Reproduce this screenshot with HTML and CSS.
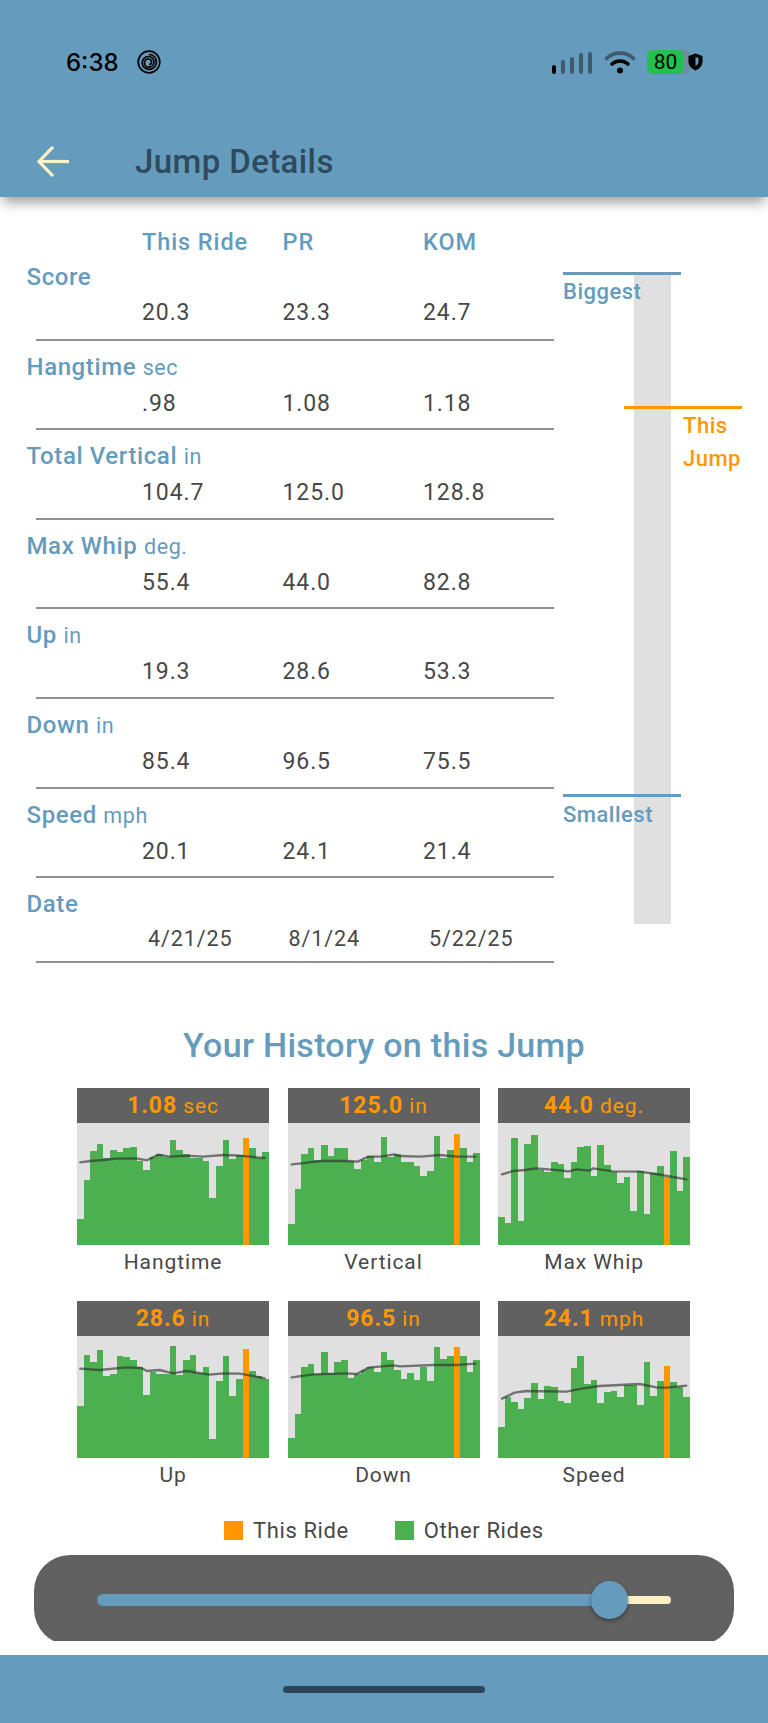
FILE: index.html
```html
<!DOCTYPE html>
<html lang="en">
<head>
    <meta charset="UTF-8">
    <meta name="viewport" content="width=device-width, initial-scale=1.0">
    <title>Jump Details</title>
    <link rel="stylesheet" href="styles.css">
</head>
<body>
    <header class="app-bar">
        <div class="status-bar">
            <div class="status-left">
                <span class="clock">6:38</span>
                <svg class="spiral" width="24" height="26" viewBox="0 0 24 26" fill="none" stroke="#000" stroke-width="1.7">
                    <circle cx="12" cy="13" r="10.8"/>
                    <path d="M12 5.5c4.6 0 7.6 3.4 7.4 7.6-.2 4.2-3.4 7.2-7.4 7.2-3.8 0-6.8-3-6.8-6.6 0-3.5 2.8-6.2 6.2-6.2 3.2 0 5.6 2.5 5.6 5.6 0 2.9-2.3 5.1-5 5.1-2.6 0-4.5-2-4.5-4.3 0-2.2 1.8-3.9 3.8-3.9 1.9 0 3.2 1.5 3.2 3 0 1.500-1.100 2.600-2.400 2.600"/>
                </svg>
            </div>
            <div class="status-right">
                <div class="signal">
                    <span class="sig sig-1"></span>
                    <span class="sig sig-2"></span>
                    <span class="sig sig-3"></span>
                    <span class="sig sig-4"></span>
                    <span class="sig sig-5"></span>
                </div>
                <svg class="wifi" width="32" height="24" viewBox="0 0 32 24" fill="none" stroke-linecap="round">
                    <path d="M2.500 8.500C9.500 1.300 22.500 1.300 29.500 8.500" stroke="#3f5a6e" stroke-width="3.600"/>
                    <path d="M8 14c4.500-4 11.500-4 16 0" stroke="#000" stroke-width="3.600"/>
                    <circle cx="16" cy="20.500" r="3" fill="#000"/>
                </svg>
                <div class="battery"><span class="battery-level">80</span></div>
                <svg class="shield" width="15" height="18" viewBox="0 0 15 18">
                    <path d="M7.500 0.500L14.500 3v5.500c0 4-3 7.500-7 9-4-1.500-7-5-7-9V3z" fill="#000"/>
                    <path d="M7.500 4L10.500 5v3.500c0 2-1.300 3.600-3 4.500z" fill="#659cbd"/>
                </svg>
            </div>
        </div>
        <div class="title-row">
            <svg class="back" width="32" height="31" viewBox="0 0 32 31" fill="none" stroke="#fdf0c5" stroke-width="3.200">
                <path d="M16 1L2 15.500 16 30"/>
                <path d="M2 15.500H32"/>
            </svg>
            <h1 class="title">Jump Details</h1>
        </div>
    </header>

    <section class="stats">
        <div class="table">
            <div class="cols head">
                <span>This Ride</span>
                <span>PR</span>
                <span>KOM</span>
            </div>
            <div class="row">
                <div class="label">Score</div>
                <div class="cols"><span>20.3</span><span>23.3</span><span>24.7</span></div>
            </div>
            <div class="row">
                <div class="label">Hangtime <small>sec</small></div>
                <div class="cols"><span>.98</span><span>1.08</span><span>1.18</span></div>
            </div>
            <div class="row">
                <div class="label">Total Vertical <small>in</small></div>
                <div class="cols"><span>104.7</span><span>125.0</span><span>128.8</span></div>
            </div>
            <div class="row">
                <div class="label">Max Whip <small>deg.</small></div>
                <div class="cols"><span>55.4</span><span>44.0</span><span>82.8</span></div>
            </div>
            <div class="row">
                <div class="label">Up <small>in</small></div>
                <div class="cols"><span>19.3</span><span>28.6</span><span>53.3</span></div>
            </div>
            <div class="row">
                <div class="label">Down <small>in</small></div>
                <div class="cols"><span>85.4</span><span>96.5</span><span>75.5</span></div>
            </div>
            <div class="row">
                <div class="label">Speed <small>mph</small></div>
                <div class="cols"><span>20.1</span><span>24.1</span><span>21.4</span></div>
            </div>
            <div class="row date-row">
                <div class="label">Date</div>
                <div class="cols dates"><span>4/21/25</span><span>8/1/24</span><span>5/22/25</span></div>
            </div>
        </div>
        <div class="gauge">
            <div class="gauge-bar"></div>
            <div class="mark mark-top"></div>
            <div class="mark-text text-top">Biggest</div>
            <div class="mark mark-this"></div>
            <div class="mark-text text-this">This<br>Jump</div>
            <div class="mark mark-bottom"></div>
            <div class="mark-text text-bottom">Smallest</div>
        </div>
    </section>

    <h2 class="history-title">Your History on this Jump</h2>

    <section class="charts">
        <div class="chart">
            <div class="chart-head"><b>1.08</b> sec</div>
            <div class="plot" id="plot-hangtime"></div>
            <div class="caption">Hangtime</div>
        </div>
        <div class="chart">
            <div class="chart-head"><b>125.0</b> in</div>
            <div class="plot" id="plot-vertical"></div>
            <div class="caption">Vertical</div>
        </div>
        <div class="chart">
            <div class="chart-head"><b>44.0</b> deg.</div>
            <div class="plot" id="plot-whip"></div>
            <div class="caption">Max Whip</div>
        </div>
        <div class="chart">
            <div class="chart-head"><b>28.6</b> in</div>
            <div class="plot" id="plot-up"></div>
            <div class="caption">Up</div>
        </div>
        <div class="chart">
            <div class="chart-head"><b>96.5</b> in</div>
            <div class="plot" id="plot-down"></div>
            <div class="caption">Down</div>
        </div>
        <div class="chart">
            <div class="chart-head"><b>24.1</b> mph</div>
            <div class="plot" id="plot-speed"></div>
            <div class="caption">Speed</div>
        </div>
    </section>

    <div class="legend">
        <span class="swatch swatch-this"></span><span class="legend-text">This Ride</span>
        <span class="swatch swatch-other"></span><span class="legend-text">Other Rides</span>
    </div>

    <div class="slider-clip">
        <div class="slider">
            <div class="track-on"></div>
            <div class="thumb"></div>
            <div class="track-off"></div>
        </div>
    </div>

    <footer class="bottom-bar">
        <div class="home-pill"></div>
    </footer>

    <script src="charts.js"></script>
</body>
</html>
```

FILE: styles.css
```css
body {
    font-family: Roboto, "Liberation Sans", sans-serif;
    background-color: #fff;
    color: #484848;
    margin: 0;
    width: 768px;
    height: 1723px;
    display: flex;
    flex-direction: column;
    overflow: hidden;
}

.app-bar {
    height: 197px;
    background: #659cbd;
    box-shadow: 0 8px 12px -3px rgba(0, 0, 0, 0.4);
    position: relative;
    z-index: 2;
    flex-shrink: 0;
}

.status-bar {
    height: 75px;
    padding: 49px 65px 0 66px;
    box-sizing: border-box;
    display: flex;
    justify-content: space-between;
    align-items: center;
}

.status-left, .status-right {
    display: flex;
    align-items: center;
}

.clock {
    font-family: Inter, Roboto, sans-serif;
    font-weight: 500;
    font-size: 24px;
    color: #000;
    margin-right: 18px;
}

.signal {
    display: flex;
    align-items: flex-end;
    gap: 4.500px;
    height: 23px;
    margin-right: 12px;
}

.sig {
    width: 4.500px;
    background: #3f5a6e;
    border-radius: 2px;
}

.sig-1 { height: 9px; background: #000; }
.sig-2 { height: 14px; }
.sig-3 { height: 17px; }
.sig-4 { height: 21px; }
.sig-5 { height: 22px; }

.wifi {
    margin-right: 11px;
}

.battery {
    width: 43px;
    height: 24px;
    border-radius: 5px;
    background: #6f8ca1;
    overflow: hidden;
}

.battery-level {
    display: block;
    width: 36px;
    height: 24px;
    background: #22c04c;
    border-radius: 5px;
    color: #000;
    font-size: 21px;
    line-height: 24px;
    text-align: center;
    padding-left: 1px;
    box-sizing: border-box;
}

.shield {
    margin-left: -2px;
}

.title-row {
    display: flex;
    align-items: center;
    height: 60px;
    margin-top: 56px;
    padding-left: 37px;
}

.title {
    margin: 0 0 0 66px;
    font-size: 33px;
    font-weight: 500;
    letter-spacing: 0.4px;
    color: #2f4a5e;
}

.stats {
    display: flex;
    flex-shrink: 0;
}

.table {
    width: 554px;
    padding-top: 31px;
}

.cols {
    display: grid;
    grid-template-columns: 140.500px 140.500px 1fr;
    padding-left: 142px;
    font-size: 23px;
    line-height: 28px;
    letter-spacing: 0.9px;
}

.head {
    color: #659cbd;
    font-weight: 500;
    font-size: 23.500px;
    height: 23px;
    line-height: 28px;
}

.row {
    height: 89.600px;
    box-sizing: border-box;
    padding-top: 12px;
    border-bottom: 2px solid #909090;
    margin-left: 36px;
}

.row .cols {
    margin: 8px 0 0 -36px;
}

.label {
    margin-left: -9.500px;
    color: #659cbd;
    font-size: 24px;
    font-weight: 500;
    line-height: 28px;
    letter-spacing: 0.6px;
}

.label small {
    font-size: 21.500px;
    font-weight: 400;
}

.date-row {
    height: 85px;
}

.date-row .cols {
    margin-top: 7px;
}

.dates {
    font-size: 21.500px;
    padding-left: 148px;
}

.gauge {
    position: relative;
    flex: 1;
}

.gauge-bar {
    position: absolute;
    left: 80px;
    top: 76px;
    width: 37px;
    height: 651px;
    background: #e0e0e0;
}

.mark {
    position: absolute;
    width: 118px;
    height: 3px;
}

.mark-top { left: 9px; top: 75px; background: #659cbd; }
.mark-this { left: 70px; top: 209px; background: #ff9800; }
.mark-bottom { left: 9px; top: 597px; background: #659cbd; }

.mark-text {
    position: absolute;
    color: #659cbd;
    font-size: 22px;
    font-weight: 500;
    line-height: 33px;
    letter-spacing: 0.5px;
}

.text-top { left: 9px; top: 78px; }
.text-this { left: 129px; top: 212px; color: #ff9800; }
.text-bottom { left: 9px; top: 601px; }

.history-title {
    margin: 62px 0 23px;
    text-align: center;
    color: #659cbd;
    font-size: 34px;
    font-weight: 500;
    letter-spacing: 0.3px;
    line-height: 40px;
}

.charts {
    display: grid;
    grid-template-columns: repeat(3, 192px);
    column-gap: 18.500px;
    row-gap: 24px;
    padding-left: 77px;
}

.chart-head {
    height: 35px;
    background: #616161;
    color: #ff9800;
    text-align: center;
    font-size: 21px;
    line-height: 35px;
    letter-spacing: 0.9px;
}

.chart-head b {
    font-weight: 700;
    font-size: 23px;
}

.plot {
    height: 122px;
    background: #e0e0e0;
}

.plot svg {
    display: block;
}

.caption {
    text-align: center;
    font-size: 21px;
    line-height: 30px;
    margin-top: 2px;
    letter-spacing: 0.9px;
}

.legend {
    display: flex;
    align-items: center;
    justify-content: flex-start;
    height: 30px;
    margin-top: 25px;
    padding-left: 224px;
    font-size: 22px;
    letter-spacing: 0.6px;
}

.swatch {
    width: 19px;
    height: 19px;
}

.swatch-this { background: #ff9800; }
.swatch-other { background: #4caf50; }

.legend-text {
    margin-left: 10px;
    margin-right: 46px;
}

.slider-clip {
    height: 86px;
    margin: 10px 34px 0;
    overflow: hidden;
}

.slider {
    height: 90px;
    border-radius: 36px;
    background: #616161;
    display: flex;
    align-items: center;
    padding-left: 63px;
}

.track-on {
    width: 512px;
    height: 12px;
    background: #659cbd;
    border-radius: 6px 0 0 6px;
}

.thumb {
    width: 37px;
    height: 38px;
    margin: 0 -18px;
    background: #659cbd;
    border-radius: 50%;
    box-shadow: 0 2px 4px rgba(0, 0, 0, 0.4);
    position: relative;
    z-index: 1;
}

.track-off {
    width: 61px;
    height: 8px;
    background: #fdf0c5;
    border-radius: 0 4px 4px 0;
}

.bottom-bar {
    margin-top: auto;
    height: 68px;
    background: #659cbd;
    display: flex;
    justify-content: center;
    padding-top: 31px;
    box-sizing: border-box;
}

.home-pill {
    width: 202px;
    height: 7px;
    border-radius: 4px;
    background: #2a4558;
}
```

FILE: charts.js
```js
// tops of the bars and the trend line, measured at 3x: plot is 576 wide, 366 high
var BASE = 366;
var BAR = 576 / 29;
var THIS_RIDE = 25;

var charts = {
    "plot-hangtime": {
        tops: [289, 172, 83, 63, 106, 81, 88, 74, 72, 113, 142, 101, 94, 101, 52, 82, 94, 106, 106, 114, 226, 129, 51, 108, 96, 44, 76, 106, 87],
        line: [[10, 118], [40, 114], [80, 111], [118, 107], [178, 106], [210, 112], [243, 95], [278, 101], [328, 98], [378, 101], [438, 96], [478, 97], [518, 101], [563, 105]]
    },
    "plot-vertical": {
        tops: [303, 199, 93, 75, 111, 67, 99, 76, 75, 114, 138, 111, 99, 116, 42, 101, 94, 116, 118, 128, 159, 144, 39, 104, 81, 34, 74, 118, 90],
        line: [[11, 124], [40, 121], [99, 114], [179, 114], [209, 116], [241, 101], [278, 101], [318, 94], [336, 99], [396, 101], [456, 96], [506, 101], [562, 101]]
    },
    "plot-whip": {
        tops: [283, 300, 46, 294, 64, 36, 141, 148, 116, 124, 165, 118, 73, 69, 158, 67, 126, 146, 180, 163, 265, 144, 274, 151, 128, 161, 85, 205, 102],
        line: [[12, 154], [45, 144], [80, 141], [115, 136], [195, 143], [210, 146], [235, 139], [275, 143], [285, 136], [345, 145], [425, 146], [475, 153], [525, 162], [565, 169]]
    },
    "plot-up": {
        tops: [211, 56, 79, 43, 121, 114, 59, 62, 71, 94, 176, 107, 114, 115, 29, 117, 73, 56, 112, 94, 310, 136, 60, 179, 128, 40, 105, 120, 128],
        line: [[10, 98], [68, 102], [148, 94], [193, 96], [210, 105], [248, 102], [288, 112], [328, 105], [398, 116], [438, 112], [488, 113], [518, 118], [563, 127]]
    },
    "plot-down": {
        tops: [305, 233, 93, 84, 114, 49, 112, 79, 73, 127, 114, 102, 94, 108, 49, 73, 102, 130, 111, 132, 94, 136, 33, 70, 59, 33, 60, 108, 71],
        line: [[11, 124], [76, 115], [176, 112], [206, 114], [241, 95], [316, 88], [336, 91], [436, 87], [506, 87], [562, 83]]
    },
    "plot-speed": {
        tops: [273, 182, 197, 220, 187, 142, 190, 150, 152, 194, 202, 97, 59, 144, 132, 201, 169, 165, 182, 147, 147, 206, 78, 180, 135, 91, 139, 152, 183],
        line: [[12, 188], [50, 170], [85, 165], [205, 167], [255, 157], [305, 150], [425, 144], [475, 154], [505, 155], [565, 149]]
    }
};

function drawChart(id, data) {
    var bars = "";
    data.tops.forEach(function (top, i) {
        var color = i === THIS_RIDE ? "#ff9800" : "#4caf50";
        bars += '<rect x="' + (i * BAR) + '" y="' + top + '" width="' + BAR + '" height="' + (BASE - top) + '" fill="' + color + '" shape-rendering="crispEdges"/>';
    });
    var points = data.line.map(function (p) { return p.join(","); }).join(" ");
    document.getElementById(id).innerHTML =
        '<svg width="192" height="122" viewBox="0 0 576 366">' + bars +
        '<polyline points="' + points + '" fill="none" stroke="#282828" stroke-opacity="0.6" stroke-width="7" stroke-linejoin="round" stroke-linecap="round"/></svg>';
}

for (var id in charts) {
    drawChart(id, charts[id]);
}
```
